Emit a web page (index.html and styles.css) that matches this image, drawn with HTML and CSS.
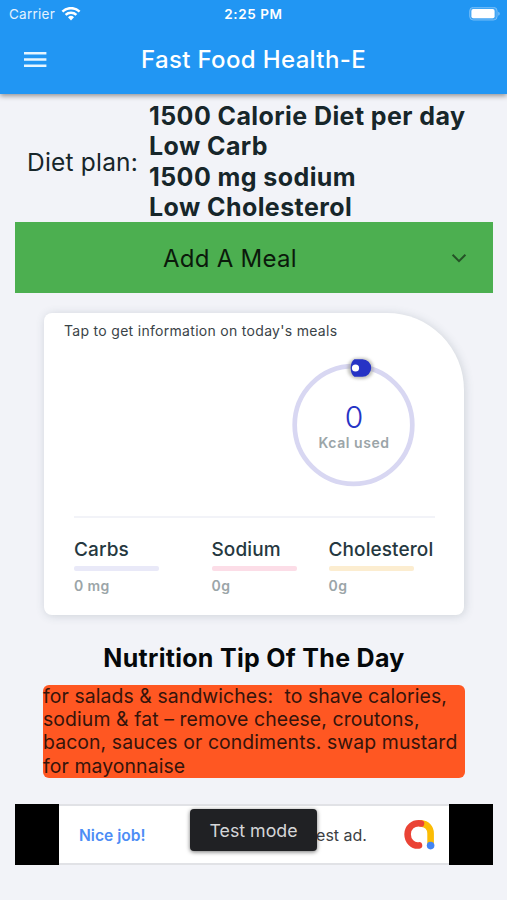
FILE: index.html
```
<!DOCTYPE html>
<html lang="en">
<head>
<meta charset="utf-8">
<title>Fast Food Health-E</title>
<link rel="stylesheet" href="styles.css">
</head>
<body>
<header class="top">
  <div class="status">
    <div class="carrier"><span>Carrier</span>
      <svg width="20" height="15" viewBox="0 0 20 15" fill="none" stroke="#fff" stroke-width="2.5"><path d="M1.4 4.600a12.400 12.400 0 0 1 17.200 0M4.600 7.900a7.900 7.900 0 0 1 10.800 0"/><path d="M7 10.200a4.400 4.400 0 0 1 6 0l-3 3.200z" fill="#fff" stroke="none"/></svg>
    </div>
    <span class="time">2:25 PM</span>
    <svg class="battery" width="32" height="15" viewBox="0 0 32 15"><rect x=".6" y=".3" width="27.600" height="12.800" rx="3.800" fill="#fff" fill-opacity=".15" stroke="#fff" stroke-opacity=".3"/><rect x="2.400" y="2.100" width="23.200" height="9.200" rx="2" fill="#fff"/><path d="M29.400 4.700c1.600.6 1.600 3.400 0 4z" fill="#fff" fill-opacity=".5"/></svg>
  </div>
  <div class="appbar">
    <svg class="menu" width="24" height="18" viewBox="0 0 24 18" fill="#e6f6ff"><path d="M1 1h22.400v2.500H1zM1 7.200h22.400v2.500H1zM1 13.400h22.400v2.500H1z"/></svg>
    <h1>Fast Food Health-E</h1>
  </div>
</header>
<main>
  <section class="plan">
    <span class="plan-label">Diet plan:</span>
    <div class="plan-list">
      <div>1500 Calorie Diet per day</div>
      <div>Low Carb</div>
      <div>1500 mg sodium</div>
      <div>Low Cholesterol</div>
    </div>
  </section>
  <div class="add"><span>Add A Meal</span>
    <svg width="16" height="10" viewBox="0 0 16 10" fill="none" stroke="#245226" stroke-width="2"><path d="M1.600 1.800 8 8.200l6.400-6.400"/></svg>
  </div>
  <section class="card">
    <p class="hint">Tap to get information on today's meals</p>
    <div class="gauge">
      <svg width="140" height="140" viewBox="0 0 140 140">
        <defs><filter id="glow" x="-60%" y="-60%" width="220%" height="220%"><feGaussianBlur stdDeviation="1.8"/></filter></defs>
        <circle cx="69.500" cy="70" r="58.800" fill="none" stroke="#d8d7f2" stroke-width="4.700"/>
        <rect x="63.500" y="3" width="26" height="21" rx="10" fill="#8a8a80" opacity=".5" filter="url(#glow)"/>
        <path d="M70 4.200h8a8.800 8.800 0 0 1 0 17.600H70c-5-3-5-14.600 0-17.600z" transform="translate(.4)" fill="#2633c5"/>
        <circle cx="71.500" cy="13" r="3.600" fill="#fff"/>
      </svg>
      <div class="gauge-text"><span class="num">0</span><span class="unit">Kcal used</span></div>
    </div>
    <div class="rule"></div>
    <div class="macros">
      <div class="macro carbs"><h3>Carbs</h3><i></i><span>0 mg</span></div>
      <div class="macro sodium"><h3>Sodium</h3><i></i><span>0g</span></div>
      <div class="macro chol"><h3>Cholesterol</h3><i></i><span>0g</span></div>
    </div>
  </section>
  <h2>Nutrition Tip Of The Day</h2>
  <div class="tip">
    <div>for salads &amp; sandwiches:&nbsp; to shave calories,</div>
    <div>sodium &amp; fat – remove cheese, croutons,</div>
    <div>bacon, sauces or condiments. swap mustard</div>
    <div>for mayonnaise</div>
  </div>
  <div class="ad">
    <div class="ad-body">
      <b>Nice job!</b>
      <span class="ad-text">test ad.</span>
      <svg class="logo" width="32" height="32" viewBox="0 0 32 32" fill="none" stroke-linecap="round" stroke-width="6.600"><path d="M18 4.400C24 4.900 27.600 9 27.600 14.500V26" stroke="#fbbc04"/><path d="M18 4.400C10 3.200 4.600 8.600 4.600 15.200c0 6.600 5 12 11.400 11.200" stroke="#ea4335"/><circle cx="27.600" cy="26.600" r="3.800" fill="#4285f4"/></svg>
    </div>
    <div class="toast">Test mode</div>
  </div>
</main>
</body>
</html>
```
FILE: styles.css
```
* { box-sizing: border-box; }
body { margin: 0; width: 507px; height: 900px; overflow: hidden; background: #f2f3f8; font-family: Inter, "Liberation Sans", sans-serif; color: #17262a; }
h1, h2, h3, p { margin: 0; font-weight: 400; }
svg { display: block; flex: none; }
.top { height: 94px; background: #2196f3; color: #fff; box-shadow: 0 2px 5px rgba(0,0,0,.4); position: relative; }
.status { height: 28px; padding: 0 6px 0 9px; display: grid; grid-template-columns: 1fr auto 1fr; align-items: center; font-size: 13px; }
.carrier { display: flex; align-items: center; gap: 6px; font-size: 13.5px; letter-spacing: .25px; color: #e4f2fe; }
.time { font-size: 13.5px; font-weight: 600; letter-spacing: .6px; margin-right: 3px; }
.battery { justify-self: end; }
.appbar { height: 64px; padding: 0 23px; display: grid; grid-template-columns: 1fr auto 1fr; align-items: center; }
h1 { font-size: 24px; font-weight: 500; letter-spacing: .35px; margin-top: -1px; }
main { padding: 7px 14px 0 15px; }
.plan { display: flex; align-items: center; height: 121px; padding-left: 12px; }
.plan-label { width: 122px; font-size: 24.5px; letter-spacing: .2px; white-space: nowrap; }
.plan-list { font-size: 25px; font-weight: 650; letter-spacing: .42px; line-height: 30.5px; white-space: nowrap; }
.add { height: 71px; background: #4caf50; display: flex; align-items: center; justify-content: space-between; padding: 1px 26px 0 148px; color: #0b1a0b; font-size: 24px; letter-spacing: .25px; }
.card { width: 420px; height: 302px; margin: 20px 0 0 29px; background: #fff; border-radius: 8px 77px 8px 8px; box-shadow: 1px 1px 10px rgba(58,81,96,.2); padding-top: 9px; }
.hint { padding-left: 20px; font-size: 14px; line-height: 18px; letter-spacing: .3px; color: #3a4347; }
.gauge { display: grid; width: 140px; height: 140px; margin: 15px 0 0 240px; }
.gauge > * { grid-area: 1 / 1; }
.gauge-text { display: flex; flex-direction: column; align-items: center; padding-top: 44px; }
.num { font-size: 30px; line-height: 36px; font-weight: 300; color: #2633c5; }
.unit { font-size: 14px; line-height: 16px; font-weight: 600; letter-spacing: .55px; color: #9ba5a8; }
.rule { height: 2px; margin: 21px 29px 0 30px; background: #f2f3f8; }
.macros { display: grid; grid-template-columns: 137.5px 117px auto; padding: 20px 0 0 30px; }
.macro h3 { font-size: 19px; line-height: 24px; font-weight: 500; letter-spacing: .1px; color: #253840; }
.macro i { display: block; width: 85px; height: 5px; margin-top: 4px; border-radius: 2px; }
.macro span { display: block; margin-top: 6px; font-size: 14px; line-height: 18px; font-weight: 600; letter-spacing: .4px; color: #9ba5a8; }
.carbs i { background: #e9e9f8; }
.sodium i { background: #fcdde7; }
.chol i { background: #fcedd0; }
h2 { margin-top: 26px; height: 34px; line-height: 34px; font-size: 25px; font-weight: 650; letter-spacing: .3px; text-align: center; color: #05080a; }
.tip { width: 422px; height: 93px; margin: 10px 0 0 28px; border-radius: 6px; background: #ff5722; color: #35140b; font-size: 19.4px; letter-spacing: .1px; line-height: 23.2px; white-space: nowrap; }
.ad { position: relative; height: 61px; margin-top: 26px; background: #000; padding: 0 44px; }
.ad-body { height: 61px; background: #fff; border: solid #e1e2e6; border-width: 2px 0; display: flex; align-items: center; padding-left: 20px; font-size: 15.6px; }
.ad b { font-weight: 600; color: #4d8df5; width: 232px; padding-top: 1px; }
.ad-text { color: #3c4043; width: 92px; font-size: 16px; padding-top: 1px; }
.toast { position: absolute; left: 175px; top: 5px; width: 127px; height: 42px; border-radius: 4px; background: #202124; color: #d5d6d8; font-size: 17.8px; line-height: 43px; text-align: center; box-shadow: 0 1px 4px rgba(0,0,0,.55); }
```
